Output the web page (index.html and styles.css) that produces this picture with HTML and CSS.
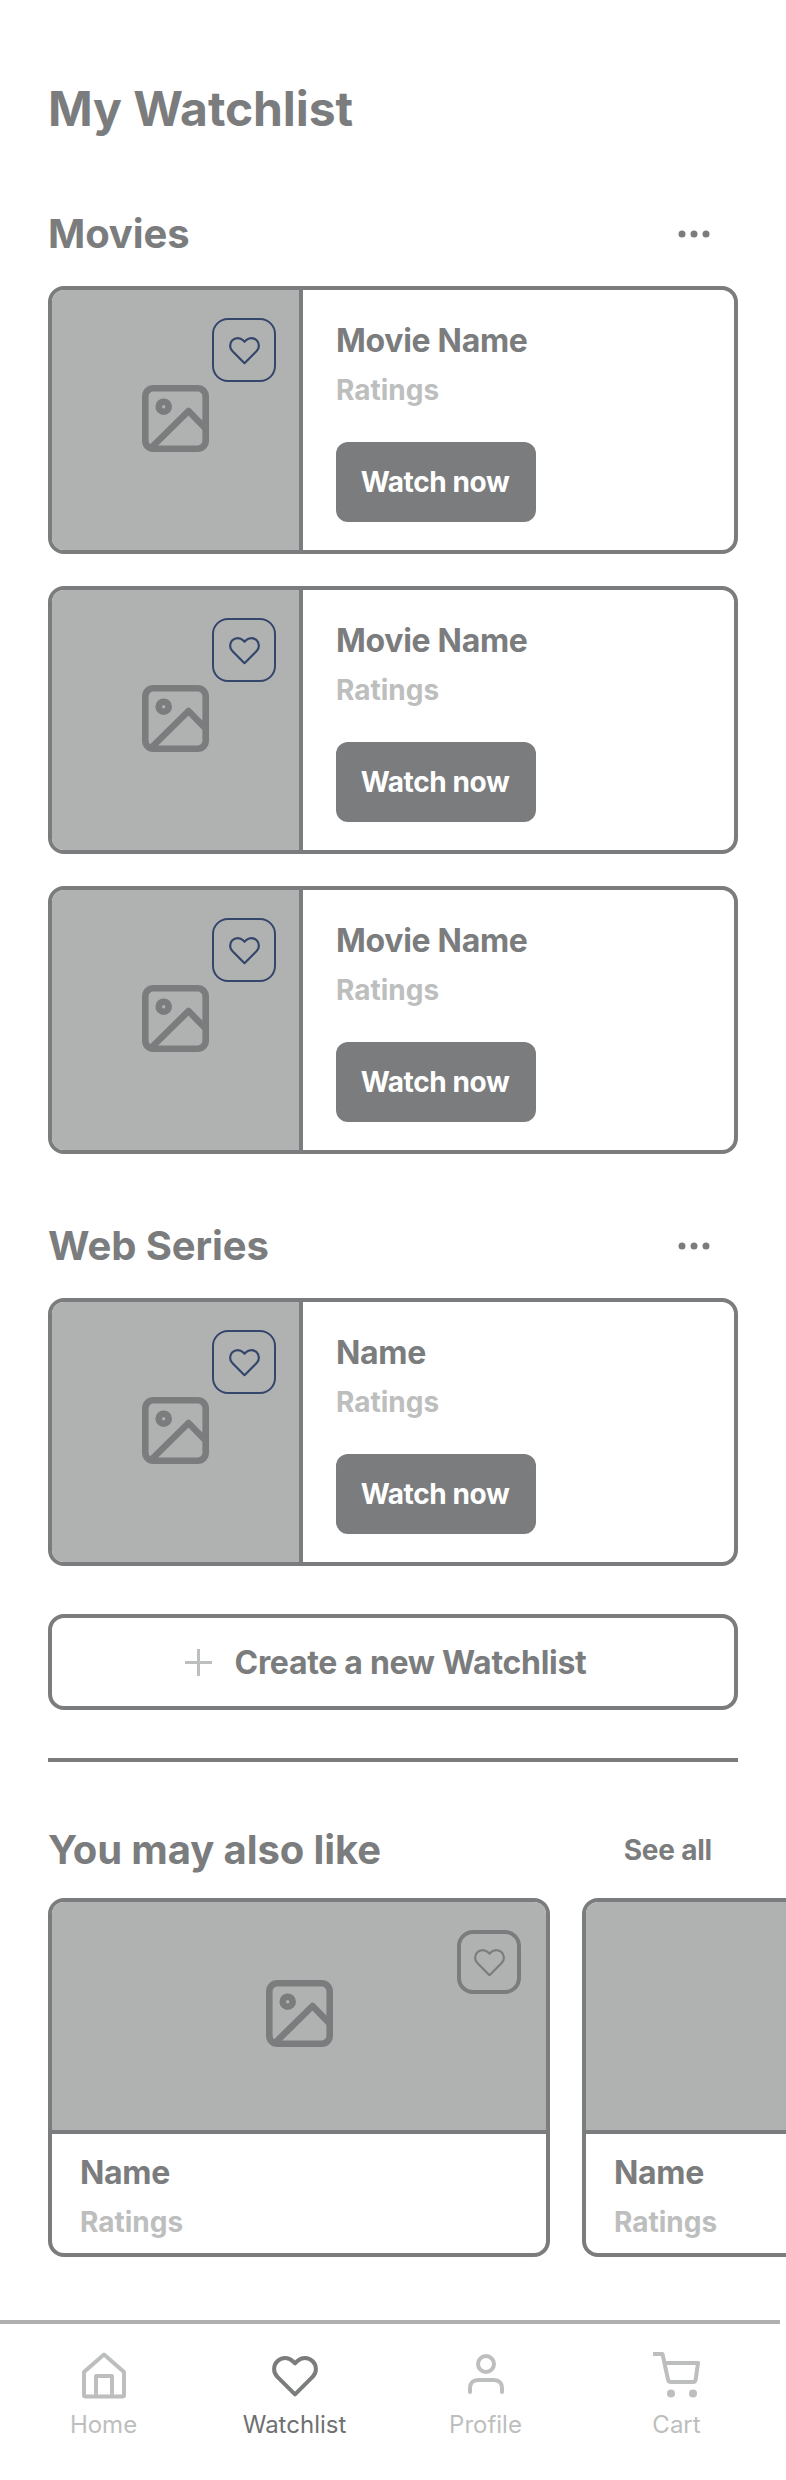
FILE: index.html
```html
<!DOCTYPE html>
<html lang="en">
<head>
<meta charset="utf-8">
<title>My Watchlist</title>
<link rel="stylesheet" href="styles.css">
</head>
<body>
<svg class="defs" width="0" height="0" aria-hidden="true">
  <symbol id="heart" viewBox="0 0 24 24"><path d="M20.84 4.61a5.5 5.5 0 0 0-7.78 0L12 5.67l-1.06-1.06a5.5 5.5 0 0 0-7.78 7.78l1.06 1.06L12 21.23l7.78-7.78 1.06-1.06a5.5 5.5 0 0 0 0-7.78z" fill="none" stroke="currentColor" stroke-linejoin="round"/></symbol>
  <symbol id="picture" viewBox="0 0 67 67"><rect x="3.3" y="3.3" width="60.4" height="60.4" rx="8" fill="none" stroke="currentColor" stroke-width="6.6"/><circle cx="21.7" cy="21.7" r="5" fill="none" stroke="currentColor" stroke-width="6.6"/><path d="M9 63L46.5 26L65 45" fill="none" stroke="currentColor" stroke-width="6.6" stroke-linejoin="round"/></symbol>
  <symbol id="dots" viewBox="0 0 32 8"><circle cx="4" cy="4" r="3.5" fill="currentColor"/><circle cx="16" cy="4" r="3.5" fill="currentColor"/><circle cx="28" cy="4" r="3.5" fill="currentColor"/></symbol>
</svg>
<main class="page">
  <h1 class="title">My Watchlist</h1>

  <div class="section-head first">
    <h2 class="section-title">Movies</h2>
    <svg class="dots"><use href="#dots"/></svg>
  </div>
  <div class="list">
    <article class="card">
      <div class="thumb">
        <button class="fav"><svg class="fav-heart"><use href="#heart"/></svg></button>
        <svg class="picture"><use href="#picture"/></svg>
      </div>
      <div class="info">
        <p class="name">Movie Name</p>
        <p class="rating">Ratings</p>
        <button class="watch">Watch now</button>
      </div>
    </article>
    <article class="card">
      <div class="thumb">
        <button class="fav"><svg class="fav-heart"><use href="#heart"/></svg></button>
        <svg class="picture"><use href="#picture"/></svg>
      </div>
      <div class="info">
        <p class="name">Movie Name</p>
        <p class="rating">Ratings</p>
        <button class="watch">Watch now</button>
      </div>
    </article>
    <article class="card">
      <div class="thumb">
        <button class="fav"><svg class="fav-heart"><use href="#heart"/></svg></button>
        <svg class="picture"><use href="#picture"/></svg>
      </div>
      <div class="info">
        <p class="name">Movie Name</p>
        <p class="rating">Ratings</p>
        <button class="watch">Watch now</button>
      </div>
    </article>
  </div>

  <div class="section-head">
    <h2 class="section-title">Web Series</h2>
    <svg class="dots"><use href="#dots"/></svg>
  </div>
  <div class="list">
    <article class="card">
      <div class="thumb">
        <button class="fav"><svg class="fav-heart"><use href="#heart"/></svg></button>
        <svg class="picture"><use href="#picture"/></svg>
      </div>
      <div class="info">
        <p class="name">Name</p>
        <p class="rating">Ratings</p>
        <button class="watch">Watch now</button>
      </div>
    </article>
  </div>

  <button class="create">
    <svg class="plus" viewBox="0 0 27 27"><path d="M13.5 0V27M0 13.5H27" fill="none" stroke="currentColor" stroke-width="3"/></svg>
    <span>Create a new Watchlist</span>
  </button>
  <hr class="rule">

  <div class="like-head">
    <h2 class="section-title">You may also like</h2>
    <a class="see-all">See all</a>
  </div>
</main>
<div class="rail">
  <article class="tile">
    <div class="tile-thumb">
      <button class="fav-solid"><svg class="fav-heart"><use href="#heart"/></svg></button>
      <svg class="picture"><use href="#picture"/></svg>
    </div>
    <div class="tile-info">
      <p class="name">Name</p>
      <p class="rating">Ratings</p>
    </div>
  </article>
  <article class="tile">
    <div class="tile-thumb"></div>
    <div class="tile-info">
      <p class="name">Name</p>
      <p class="rating">Ratings</p>
    </div>
  </article>
</div>
<nav class="tabbar">
  <a class="tab">
    <svg class="tab-icon" viewBox="0 0 48 48"><path d="M4 20L24 2.500L44 20V43C44 44 43.500 44.500 42.500 44.500H5.500C4.500 44.500 4 44 4 43Z M16 44V24H32V44" fill="none" stroke="currentColor" stroke-width="4" stroke-linejoin="round"/></svg>
    <span>Home</span>
  </a>
  <a class="tab active">
    <svg class="tab-icon" viewBox="0 0 24 24"><use href="#heart"/></svg>
    <span>Watchlist</span>
  </a>
  <a class="tab">
    <svg class="tab-icon" viewBox="0 0 48 48"><circle cx="24" cy="12" r="8" fill="none" stroke="currentColor" stroke-width="4"/><path d="M8 40V36C8 31 11 28 16 28H32C37 28 40 31 40 36V40" fill="none" stroke="currentColor" stroke-width="4" stroke-linecap="round"/></svg>
    <span>Profile</span>
  </a>
  <a class="tab">
    <svg class="tab-icon" viewBox="0 0 48 48"><path d="M1 2H9.500L15 27.500C15.300 29.300 16.300 30 18 30H40C41.500 30 42.500 29 42.700 27.500L45 11H11.500" fill="none" stroke="currentColor" stroke-width="4" stroke-linecap="round" stroke-linejoin="round"/><circle cx="18" cy="41.500" r="4" fill="currentColor"/><circle cx="40" cy="41.500" r="4" fill="currentColor"/></svg>
    <span>Cart</span>
  </a>
</nav>
</body>
</html>
```
FILE: styles.css
```css
* { box-sizing: border-box; }
html, body { margin: 0; padding: 0; }
body {
  width: 786px;
  height: 2480px;
  overflow: hidden;
  background: #fff;
  color: #7b7c7d;
  font-family: Inter, "Liberation Sans", sans-serif;
}
p, h1, h2 { margin: 0; }
button { font-family: inherit; padding: 0; cursor: pointer; }
.defs { position: absolute; }

.page { padding: 81px 48px 0; }
.title { font-size: 48px; line-height: 56px; font-weight: 700; letter-spacing: -0.1px; }

.section-head {
  display: flex;
  align-items: center;
  justify-content: space-between;
  height: 48px;
  margin: 68px 0 28px;
  padding-right: 28px;
}
.section-head.first { margin-top: 73px; }
.section-title { font-size: 40px; line-height: 48px; font-weight: 700; letter-spacing: -0.1px; }
.dots { width: 32px; height: 8px; }

.list { display: flex; flex-direction: column; gap: 32px; }
.card {
  display: flex;
  height: 268px;
  border: 4px solid #7b7c7d;
  border-radius: 16px;
  overflow: hidden;
}
.thumb {
  position: relative;
  display: flex;
  align-items: center;
  justify-content: center;
  flex: 0 0 251px;
  padding-bottom: 4px;
  background: #b0b2b1;
  border-right: 4px solid #7b7c7d;
}
.picture { width: 67px; height: 67px; color: #7b7c7d; }
.fav {
  position: absolute;
  top: 28px;
  left: 160px;
  display: flex;
  align-items: center;
  justify-content: center;
  width: 64px;
  height: 64px;
  background: transparent;
  border: 2px solid #34466a;
  border-radius: 16px;
  color: #34466a;
}
.fav-heart { width: 33px; height: 33px; stroke-width: 1.6; }

.info {
  display: flex;
  flex-direction: column;
  align-items: flex-start;
  padding: 31px 0 0 33px;
}
.name { font-size: 32px; line-height: 40px; font-weight: 700; letter-spacing: -0.3px; }
.rating { margin-top: 9px; font-size: 28px; line-height: 40px; font-weight: 700; color: #bdbebe; }
.watch {
  margin-top: 32px;
  width: 200px;
  height: 80px;
  padding-right: 2px;
  border: 0;
  border-radius: 12px;
  background: #7b7c7d;
  color: #fff;
  font-size: 28px;
  font-weight: 700;
  letter-spacing: -0.4px;
}

.create {
  display: flex;
  align-items: center;
  justify-content: center;
  gap: 23px;
  width: 100%;
  height: 96px;
  margin-top: 48px;
  padding-right: 15px;
  background: #fff;
  border: 4px solid #7b7c7d;
  border-radius: 16px;
  color: #7b7c7d;
  font-size: 32px;
  font-weight: 700;
  letter-spacing: -0.3px;
}
.plus { width: 27px; height: 27px; color: #bdbebe; }
.rule { height: 4px; margin: 48px 0 0; border: 0; background: #7b7c7d; }

.like-head {
  display: flex;
  align-items: center;
  justify-content: space-between;
  height: 48px;
  margin-top: 64px;
  padding-right: 26px;
}
.see-all { font-size: 28px; font-weight: 700; letter-spacing: -0.2px; }

.rail {
  display: flex;
  gap: 32px;
  margin-top: 24px;
  padding-left: 48px;
  overflow: hidden;
}
.tile {
  flex: 0 0 502px;
  height: 359px;
  border: 4px solid #7b7c7d;
  border-radius: 16px;
  overflow: hidden;
}
.tile-thumb {
  position: relative;
  display: flex;
  align-items: center;
  justify-content: center;
  height: 232px;
  padding-bottom: 5px;
  background: #b0b2b1;
  border-bottom: 4px solid #7b7c7d;
}
.fav-solid {
  position: absolute;
  top: 28px;
  left: 405px;
  display: flex;
  align-items: center;
  justify-content: center;
  width: 64px;
  height: 64px;
  background: transparent;
  border: 4px solid #7b7c7d;
  border-radius: 16px;
  color: #7b7c7d;
}
.tile-info { padding: 19px 0 0 28px; }
.tile-info .rating { margin-top: 9px; }

.tabbar {
  display: grid;
  grid-template-columns: repeat(4, 1fr);
  width: 780px;
  height: 160px;
  margin-top: 63px;
  padding: 28px 8px 0;
  border-top: 4px solid #b0b0b0;
}
.tab {
  display: flex;
  flex-direction: column;
  align-items: center;
  color: #bdbebe;
  font-size: 24px;
  line-height: 32px;
}
.tab.active { color: #6f7071; }
.tab.active .tab-icon { color: #7b7c7d; stroke-width: 2; }
.tab-icon { width: 48px; height: 48px; margin-bottom: 9px; }
```
